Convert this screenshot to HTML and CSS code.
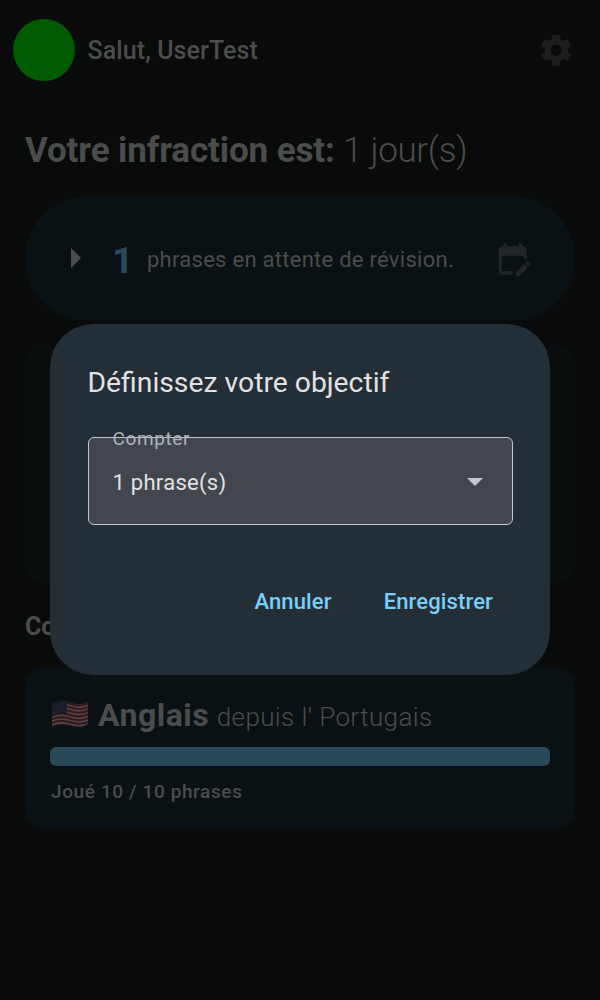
FILE: index.html
```html
<!DOCTYPE html>
<html lang="fr">
<head>
<meta charset="utf-8">
<title>Définissez votre objectif</title>
<link rel="stylesheet" href="styles.css">
</head>
<body>
<main class="screen">
  <header class="topbar">
    <div class="avatar"></div>
    <span class="greeting">Salut, UserTest</span>
    <svg class="gear" viewBox="0 0 24 24"><path d="M19.14 12.94c.04-.3.06-.61.06-.94s-.02-.64-.07-.94l2.03-1.58a.49.49 0 0 0 .12-.61l-1.92-3.32a.488.488 0 0 0-.59-.22l-2.39.96c-.5-.38-1.03-.7-1.62-.94l-.36-2.54a.484.484 0 0 0-.48-.41h-3.84c-.24 0-.43.17-.47.41l-.36 2.54c-.59.24-1.13.57-1.62.94l-2.39-.96c-.22-.08-.47 0-.59.22L2.74 8.87c-.12.21-.08.47.12.61l2.03 1.58c-.05.3-.09.63-.09.94s.02.64.07.94l-2.03 1.58a.49.49 0 0 0-.12.61l1.92 3.32c.12.22.37.29.59.22l2.39-.96c.5.38 1.03.7 1.62.94l.36 2.54c.05.24.24.41.48.41h3.84c.24 0 .44-.17.47-.41l.36-2.54c.59-.24 1.13-.56 1.62-.94l2.39.96c.22.08.47 0 .59-.22l1.92-3.32c.12-.22.07-.47-.12-.61zM12 15.6A3.6 3.6 0 1 1 12 8.400a3.6 3.6 0 0 1 0 7.200z"/></svg>
  </header>
  <h1 class="streak"><b>Votre infraction est:</b> 1 jour(s)</h1>
  <section class="review">
    <svg class="play" viewBox="0 0 10 20"><path d="M0 0l10 10L0 20z"/></svg>
    <span class="count">1</span>
    <span class="review-text">phrases en attente de révision.</span>
    <svg class="calendar" viewBox="0 0 24 24"><path d="M5 22c-1.100 0-2-.9-2-2V6c0-1.100.9-2 2-2h1V2h2v2h8V2h2v2h1c1.100 0 2 .9 2 2v6h-2v-2H5v10h7v2zm17.130-5.010l-2.120-2.120.710-.710a.996.996 0 0 1 1.410 0l.710.710c.390.390.390 1.020 0 1.410zm-.710.710l-5.300 5.300H14v-2.120l5.300-5.300z"/></svg>
  </section>
  <section class="stats"></section>
  <h2 class="courses">Cours</h2>
  <section class="course">
    <div class="course-title">
      <svg class="flag" viewBox="0 0 38 27">
        <defs><clipPath id="wave"><path d="M1 3C8-1 14 0 20 2s11 2 17-1v22c-6 4-12 3-18 1.500S7 23 1 26z"/></clipPath></defs>
        <g clip-path="url(#wave)">
          <path class="flag-white" d="M0 0h38v27H0z"/>
          <path class="flag-red" d="M0 4C8 0 14 1 20 3s12 2 18-1M0 7.700c8-4 14-3 20-1s12 2 18-1M0 11.400c8-4 14-3 20-1s12 2 18-1M0 15.100c8-4 14-3 20-1s12 2 18-1M0 18.800c8-4 14-3 20-1s12 2 18-1M0 22.500c8-4 14-3 20-1s12 2 18-1M0 26.200c8-4 14-3 20-1s12 2 18-1"/>
          <path class="flag-blue" d="M0 0h16v13C11 11.700 6 12 0 15z"/>
          <path class="flag-stars" d="M2 5q7-3 13-2M2 7.500q7-3 13-2M2 10q7-3 13-2M2 12.500q7-3 13-2"/>
        </g>
      </svg>
      <b class="lang">Anglais</b>
      <span class="from">depuis l' Portugais</span>
    </div>
    <div class="bar"></div>
    <div class="played">Joué 10 / 10 phrases</div>
  </section>
</main>
<div class="overlay">
  <div class="dialog" role="dialog">
    <div class="dialog-title">Définissez votre objectif</div>
    <div class="field">
      <span class="label">Compter</span>
      <span class="value">1 phrase(s)</span>
      <svg class="caret" viewBox="0 0 16 8"><path d="M0 0h16L8 8z"/></svg>
    </div>
    <div class="actions">
      <span class="cancel">Annuler</span>
      <span class="save">Enregistrer</span>
    </div>
  </div>
</div>
</body>
</html>
```
FILE: styles.css
```css
* { box-sizing: border-box; }
body {
  margin: 0;
  width: 600px;
  height: 1000px;
  overflow: hidden;
  background: #090a0a;
  color: #4b4c4c;
  font-family: Roboto, sans-serif;
  white-space: nowrap;
}
svg { display: block; flex: none; }
h1, h2 { margin: 0; }
.screen { display: flex; flex-direction: column; height: 1000px; }
.topbar {
  display: flex;
  align-items: center;
  height: 100px;
  padding: 0 24.500px 0 12.500px;
}
.avatar { width: 62.500px; height: 62.500px; border-radius: 50%; background: #005a00; }
.greeting { margin: 1px auto 0 12.500px; font-size: 25px; font-weight: 500; letter-spacing: 0.090px; }
.gear { width: 38.500px; height: 38.500px; fill: #1b1d1f; }
.streak {
  height: 96px;
  padding: 30px 25px 0;
  font-size: 35px;
  line-height: 42px;
  font-weight: 300;
  letter-spacing: -0.300px;
}
.streak b { font-weight: 700; letter-spacing: -0.110px; }
.review {
  display: flex;
  align-items: center;
  height: 125px;
  margin: 0 25px;
  padding: 0 44px 0 46px;
  border-radius: 62.500px;
  background: #0a1114;
}
.play { width: 10px; height: 20px; margin-top: -1px; fill: #4b4c4c; }
.count { margin: 3px 0 0 31px; width: 35px; font-size: 37.500px; font-weight: 700; color: #294858; }
.review-text { margin: 2px auto 0 0; font-size: 22px; letter-spacing: 0.270px; }
.calendar { width: 37.500px; height: 37.500px; fill: #222629; }
.stats { height: 237px; margin: 25px 25px 0; border-radius: 19px; background: #090d0e; }
.courses { height: 84px; padding: 29px 25px 0; font-size: 25px; line-height: 30px; font-weight: 700; }
.course { height: 162px; margin: 0 25px; padding: 28px 25px 0; border-radius: 19px; background: #0a1114; }
.course-title { display: flex; align-items: baseline; height: 52px; line-height: 40px; }
.flag { width: 38px; height: 27px; margin: 6px 9px 0 1px; align-self: flex-start; }
.flag-white { fill: #484545; }
.flag-red { fill: none; stroke: #3d1118; stroke-width: 1.900; }
.flag-blue { fill: #171a2b; }
.flag-stars { fill: none; stroke: #34364a; stroke-width: 0.900; stroke-dasharray: 1 1.500; }
.lang { margin-right: 7.500px; font-size: 32px; font-weight: 700; letter-spacing: 0.500px; }
.from { font-size: 26px; font-weight: 300; letter-spacing: 0.390px; }
.bar { height: 19px; border-radius: 6px; background: #294858; }
.played { margin: 15px 0 0 1px; font-size: 19px; line-height: 22px; font-weight: 500; letter-spacing: 0.620px; }
.overlay { position: absolute; inset: 0; display: flex; justify-content: center; align-items: center; width: 600px; height: 999px; }
.dialog {
  width: 500px;
  height: 351px;
  padding: 38px 37.500px 0;
  border-radius: 43.750px;
  background: #232e36;
  color: #e1e2e5;
}
.dialog-title { height: 75px; font-size: 28.300px; line-height: 42px; }
.field {
  position: relative;
  display: flex;
  align-items: center;
  justify-content: space-between;
  height: 88px;
  padding: 0 28.500px 0 24px;
  border: 1.600px solid #c1c7ce;
  border-radius: 6px;
  background: #42474e;
}
.label { position: absolute; left: 24px; top: -10px; font-size: 19px; line-height: 22px; letter-spacing: 0.620px; color: #adb4bc; }
.value { margin-top: 2px; font-size: 22px; letter-spacing: 0.270px; }
.caret { width: 16px; height: 8px; margin-top: 2px; fill: #c1c7ce; }
.actions { display: flex; justify-content: flex-end; gap: 52px; padding: 63px 19.500px 0 0; font-size: 22px; line-height: 27px; font-weight: 500; letter-spacing: 0.130px; color: #79cffb; }
```
